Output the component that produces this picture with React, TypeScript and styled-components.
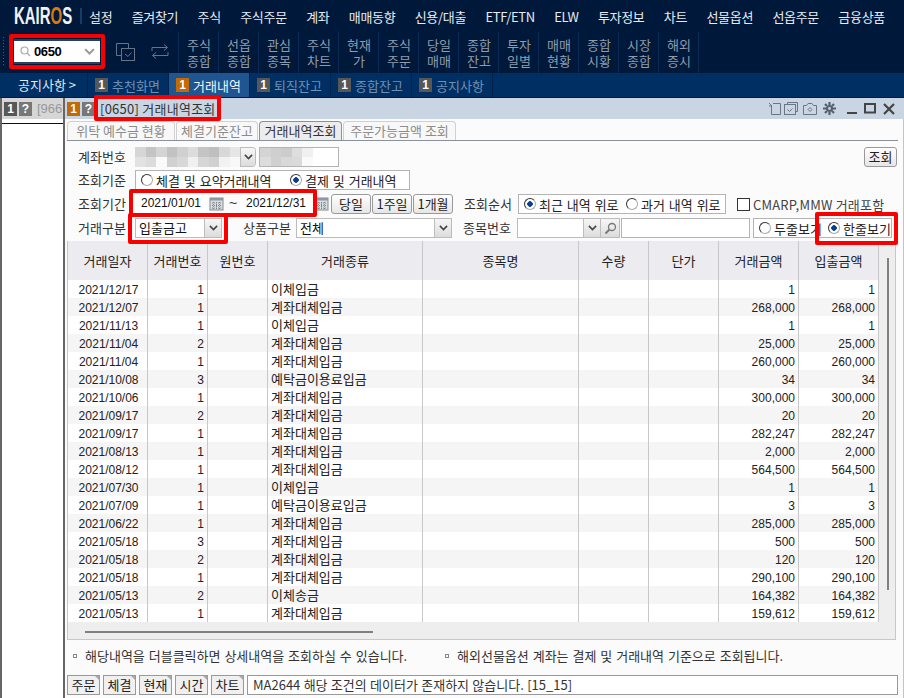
import React from 'react'
import styled, { createGlobalStyle } from 'styled-components'

const KR = `'Noto Sans CJK KR', 'Liberation Sans', sans-serif`
const LATIN = `'Liberation Sans', 'Noto Sans CJK KR', sans-serif`

const menus = ['설정', '즐겨찾기', '주식', '주식주문', '계좌', '매매동향', '신용/대출', 'ETF/ETN', 'ELW', '투자정보', '차트', '선물옵션', '선옵주문', '금융상품']
const tools = [['주식', '종합'], ['선옵', '종합'], ['관심', '종목'], ['주식', '차트'], ['현재', '가'], ['주식', '주문'], ['당일', '매매'], ['종합', '잔고'], ['투자', '일별'], ['매매', '현황'], ['종합', '시황'], ['시장', '종합'], ['해외', '증시']]
const screens = ['추천화면', '거래내역', '퇴직잔고', '종합잔고', '공지사항']
const subTabs = ['위탁 예수금 현황', '체결기준잔고', '거래내역조회', '주문가능금액 조회']
const columns = [
  { title: '거래일자', width: 80 },
  { title: '거래번호', width: 60 },
  { title: '원번호', width: 60 },
  { title: '거래종류', width: 155 },
  { title: '종목명', width: 156 },
  { title: '수량', width: 70 },
  { title: '단가', width: 70 },
  { title: '거래금액', width: 80 },
  { title: '입출금액', width: 80 },
]
const rows: [string, number, string, string][] = [
  ['2021/12/17', 1, '이체입금', '1'],
  ['2021/12/07', 1, '계좌대체입금', '268,000'],
  ['2021/11/13', 1, '이체입금', '1'],
  ['2021/11/04', 2, '계좌대체입금', '25,000'],
  ['2021/11/04', 1, '계좌대체입금', '260,000'],
  ['2021/10/08', 3, '예탁금이용료입금', '34'],
  ['2021/10/06', 1, '계좌대체입금', '300,000'],
  ['2021/09/17', 2, '계좌대체입금', '20'],
  ['2021/09/17', 1, '계좌대체입금', '282,247'],
  ['2021/08/13', 1, '계좌대체입금', '2,000'],
  ['2021/08/12', 1, '계좌대체입금', '564,500'],
  ['2021/07/30', 1, '이체입금', '1'],
  ['2021/07/09', 1, '예탁금이용료입금', '3'],
  ['2021/06/22', 1, '계좌대체입금', '285,000'],
  ['2021/05/18', 3, '계좌대체입금', '500'],
  ['2021/05/18', 2, '계좌대체입금', '120'],
  ['2021/05/18', 1, '계좌대체입금', '290,100'],
  ['2021/05/13', 2, '이체송금', '164,382'],
  ['2021/05/13', 1, '계좌대체입금', '159,612'],
]
const mosaicA = ['#d6d6d6', '#c4c4c4', '#d4d4d4', '#c2c2c2', '#d0d0d0', '#dcdcdc', '#c4c4c4', '#bfbfbf', '#d8d8d8', '#e6e6e6', '#e2e2e2', '#dcdcdc', '#fafafa', '#d0d0d0', '#d8d8d8', '#f0f0f0', '#d6d6d6', '#d0d0d0', '#f2f2f2', '#f8f8f8']
const mosaicB = ['#d4d4d4', '#cfcfcf', '#cccccc', '#dedede', '#f0f0f0', '#dcdcdc', '#d0d0d0', '#d8d8d8', '#dadada', '#fafafa']
const orderButtons = ['주문', '체결', '현재', '시간', '차트']

const GlobalStyle = createGlobalStyle`
  html, body { margin: 0; padding: 0; background: #fff; }
  * { box-sizing: border-box; }
  body { font-family: ${KR}; font-size: 13px; color: #222; }
`

const Page = styled.div`
  width: 904px;
  height: 698px;
  overflow: hidden;
  display: flex;
  flex-direction: column;
`
const MenuBar = styled.div`
  height: 32px;
  background: #00183a;
  display: flex;
  align-items: center;
  padding-left: 14px;
`
const Logo = styled.div`
  width: 58px;
  font-family: ${LATIN};
  font-size: 23px;
  font-weight: 700;
  color: #f2f2f2;
  transform: scaleX(0.65);
  transform-origin: left center;
  white-space: nowrap;
  span { color: #d87a10; }
`
const LogoBar = styled.div`
  width: 2px;
  height: 16px;
  background: #1d3a66;
  margin: 0 7px 0 8px;
`
const MenuList = styled.div`
  display: flex;
  gap: 19.3px;
`
const MenuItem = styled.div`
  color: #e6ebf2;
  font-size: 13px;
  letter-spacing: -0.3px;
  white-space: nowrap;
`
const ToolBar = styled.div`
  height: 41px;
  background: #00183a;
  display: flex;
  align-items: stretch;
`
const Grip = styled.div`
  width: 3px;
  margin: 4px 0 6px 2px;
  background-image: radial-gradient(#3c5a85 1px, transparent 1px);
  background-size: 3px 3px;
`
const SearchBox = styled.div`
  width: 86px;
  height: 25px;
  margin: 7px 0 0 9px;
  background: #fff;
  border-top: 2px solid #2c3f5c;
  border-bottom: 2px solid #2c3f5c;
  display: flex;
  align-items: center;
  padding: 0 5px 0 6px;
`
const Code = styled.span`
  font-family: ${LATIN};
  font-weight: 700;
  font-size: 13px;
  letter-spacing: -0.4px;
  color: #000;
  margin-left: 3px;
  flex: 1;
`
const ToolIcons = styled.div`
  width: 78px;
  display: flex;
  align-items: center;
  gap: 15px;
  padding: 0 0 2px 16px;
`
const ToolItem = styled.div`
  width: 40px;
  height: 41px;
  border-left: 1px solid #0c2a55;
  color: #8f9cad;
  font-size: 13px;
  line-height: 15.5px;
  text-align: center;
  padding: 5px 0 0 1px;
  &:last-child { width: 41px; border-right: 1px solid #0c2a55; }
`
const ScreenBar = styled.div`
  height: 25px;
  background: #003063;
  display: flex;
  align-items: stretch;
  border-bottom: 1px solid #00183a;
`
const Notice = styled.div`
  width: 88px;
  color: #dfe7f0;
  font-size: 13px;
  padding: 1px 0 0 18px;
  line-height: 22px;
  border-right: 1px solid #022049;
  white-space: nowrap;
`
const ScreenTab = styled.div<{ $active?: boolean }>`
  width: 81px;
  display: flex;
  align-items: center;
  gap: 4px;
  padding-left: 7px;
  background: ${p => (p.$active ? '#1f5590' : 'transparent')};
  color: ${p => (p.$active ? '#f2f5f9' : '#6f8fb3')};
  border-right: 1px solid #022049;
  white-space: nowrap;
`
const Badge = styled.span<{ $tone?: 'orange' | 'dark' | 'gray' }>`
  width: 13px;
  height: 14px;
  flex: none;
  background: ${p => (p.$tone === 'orange' ? '#c06a08' : p.$tone === 'gray' ? '#777' : '#575757')};
  color: #fff;
  font-family: ${LATIN};
  font-size: 12px;
  font-weight: 700;
  line-height: 14px;
  text-align: center;
`
const Desk = styled.div`
  flex: 1;
  display: flex;
  min-height: 0;
`
const SideWindow = styled.div`
  width: 63px;
  flex: none;
  border-left: 2px solid #666;
  background: #fff;
  overflow: hidden;
`
const SideTitle = styled.div`
  height: 26px;
  background: #d6d6d6;
  border-bottom: 1px solid #111;
  display: flex;
  align-items: center;
  gap: 2px;
  padding: 0 0 4px 2px;
  color: #999;
  white-space: nowrap;
  box-shadow: inset 0 -4px 0 #fff;
`
const SideCode = styled.span`
  margin-left: 3px;
  font-family: ${LATIN};
  font-size: 13px;
`
const MainWindow = styled.div`
  flex: 1;
  min-width: 0;
  border-left: 2px solid #666;
  border-right: 1px solid #c4c4c4;
  background: #fbfbfb;
  display: flex;
  flex-direction: column;
  padding-right: 7px;
`
const TitleBar = styled.div`
  height: 21px;
  margin-right: -8px;
  background: #c9d5e3;
  display: flex;
  align-items: center;
  gap: 2px;
  padding: 0 9px 0 2px;
`
const Marked = styled.div<{ $inset: string }>`
  position: relative;
  display: flex;
  align-items: center;
  &::after {
    content: '';
    position: absolute;
    inset: ${p => p.$inset};
    border: 4px solid #f80000;
    border-radius: 2px;
    pointer-events: none;
    z-index: 5;
  }
`
const SearchMark = styled(Marked)`
  align-items: flex-start;
`
const TitleText = styled.span`
  margin-left: 3px;
  font-size: 13px;
  color: #333;
  white-space: nowrap;
  letter-spacing: 0.25px;
`
const WindowIcons = styled.div`
  margin-left: auto;
  display: flex;
  align-items: center;
  gap: 3px;
`
const IconSlot = styled.span<{ $ml?: number }>`
  display: flex;
  margin-left: ${p => p.$ml ?? 0}px;
`
const TabStrip = styled.div`
  height: 22px;
  margin: 0 -2px 0 2px;
  padding-top: 3px;
  display: flex;
  align-items: flex-end;
  gap: 1px;
  border-bottom: 1px solid #8a929c;
`
const SubTab = styled.div<{ $active?: boolean; $w: number }>`
  width: ${p => p.$w}px;
  height: 19px;
  border: 1px solid ${p => (p.$active ? '#8a929c' : '#d0d0d0')};
  border-bottom: 0;
  border-radius: 4px 4px 0 0;
  background: ${p => (p.$active ? '#ececec' : '#f8f8f8')};
  color: ${p => (p.$active ? '#333' : '#8c8c8c')};
  font-size: 13px;
  line-height: 17px;
  text-align: center;
  white-space: nowrap;
`
const Form = styled.div`
  display: flex;
  flex-direction: column;
  height: 100px;
  padding: 6px 0 0 13px;
`
const FormRow = styled.div`
  height: 24px;
  display: flex;
  align-items: flex-start;
  flex: none;
  &:first-child { height: 23px; }
`
const Label = styled.span<{ $ml?: number; $w?: number }>`
  width: ${p => p.$w ?? 57}px;
  margin-left: ${p => p.$ml ?? 0}px;
  flex: none;
  font-size: 13px;
  line-height: 19px;
  color: #333;
  white-space: nowrap;
`
const Mosaic = styled.div<{ $w: number; $cols: number }>`
  width: ${p => p.$w}px;
  height: 20px;
  display: grid;
  grid-template-columns: repeat(${p => p.$cols}, 1fr);
  grid-auto-rows: 10px;
  flex: none;
`
const InputMosaic = styled(Mosaic)`
  height: 18px;
  grid-auto-rows: 9px;
`
const Cell = styled.i<{ $c: string }>`
  background: ${p => p.$c};
`
const ArrowButton = styled.span<{ $w?: number }>`
  width: ${p => p.$w ?? 17}px;
  flex: none;
  align-self: stretch;
  border-left: 1px solid #bdbdbd;
  background: linear-gradient(#f6f6f6, #dcdcdc);
  display: flex;
  align-items: center;
  justify-content: center;
`
const SelectBox = styled.div<{ $w: number; $ml?: number }>`
  width: ${p => p.$w}px;
  height: 20px;
  margin-left: ${p => p.$ml ?? 0}px;
  flex: none;
  border: 1px solid #bcbcbc;
  background: #fff;
  display: flex;
  align-items: stretch;
`
const AccountArrow = styled(SelectBox)`
  border-left: 0;
  border-radius: 0 4px 4px 0;
  overflow: hidden;
`
const SelectText = styled.span`
  flex: 1;
  padding-left: 3px;
  font-size: 13px;
  line-height: 18px;
  color: #111;
  white-space: nowrap;
`
const PlainInput = styled.div<{ $w: number; $ml?: number }>`
  width: ${p => p.$w}px;
  height: 20px;
  margin-left: ${p => p.$ml ?? 0}px;
  flex: none;
  border: 1px solid #b4b4b4;
  background: #fff;
`
const RadioGroup = styled.div<{ $w: number; $ml?: number }>`
  width: ${p => p.$w}px;
  height: 20px;
  margin-left: ${p => p.$ml ?? 0}px;
  flex: none;
  border: 1px solid #b4b4b4;
  background: #fff;
  display: flex;
  align-items: center;
  padding-left: 5px;
`
const RadioOption = styled.span<{ $w?: number }>`
  width: ${p => (p.$w ? `${p.$w}px` : 'auto')};
  flex: none;
  display: flex;
  align-items: center;
  gap: 3px;
  font-size: 13px;
  word-spacing: 1px;
  color: #222;
  white-space: nowrap;
`
const RadioDot = styled.i<{ $on?: boolean }>`
  width: 12px;
  height: 12px;
  border-radius: 50%;
  border: 1px solid #333;
  border-right-color: #aaa;
  border-bottom-color: #aaa;
  background: ${p => (p.$on ? 'radial-gradient(circle, #0b3f8a 0 2.5px, #fff 3px)' : '#fff')};
  flex: none;
`
const DateField = styled.div`
  width: 72px;
  height: 19px;
  flex: none;
  background: #fff;
  font-family: ${LATIN};
  font-size: 12px;
  line-height: 19px;
  text-align: center;
  color: #111;
`
const Tilde = styled.span`
  width: 14px;
  flex: none;
  text-align: center;
  font-family: ${LATIN};
  font-size: 14px;
  line-height: 19px;
  color: #333;
`
const CalButton = styled.span`
  width: 19px;
  height: 19px;
  flex: none;
  display: flex;
  align-items: center;
  justify-content: center;
`
const SoftButton = styled.div<{ $w: number; $ml?: number }>`
  width: ${p => p.$w}px;
  height: 20px;
  margin-left: ${p => p.$ml ?? 0}px;
  flex: none;
  border: 1px solid #999;
  border-radius: 3px;
  background: linear-gradient(#fff, #e6e6e6);
  font-size: 13px;
  line-height: 18px;
  text-align: center;
  color: #222;
  white-space: nowrap;
`
const CheckOption = styled.div`
  margin-left: 11px;
  display: flex;
  align-items: center;
  gap: 3px;
  height: 20px;
  font-size: 13px;
  letter-spacing: 0.2px;
  color: #444;
  white-space: nowrap;
`
const CheckBox = styled.i`
  width: 13px;
  height: 13px;
  border: 1px solid #333;
  background: #fff;
  flex: none;
`
const TablePanel = styled.div`
  height: 399px;
  margin-left: 2px;
  border: 1px solid #c8c8c8;
  border-top: 0;
  background: #eeeeee;
  position: relative;
`
const Grid = styled.table`
  width: 811px;
  border-collapse: separate;
  border-spacing: 0;
  table-layout: fixed;
  background: #fff;
`
const HeadCell = styled.th`
  height: 39px;
  padding: 0;
  background: #ebebf0;
  border-right: 1px solid #c8c8c8;
  font-size: 13px;
  font-weight: 400;
  color: #222;
`
const BodyRow = styled.tr`
  height: 18px;
  &:nth-child(even) td { background: #f5f5f5; }
`
const BodyCell = styled.td<{ $align?: string; $kr?: boolean }>`
  height: 18px;
  padding: ${p => (p.$kr ? '0 0 0 3px' : '1px 3px 0 0')};
  text-align: ${p => p.$align ?? 'right'};
  border-right: 1px solid #c8c8c8;
  font-family: ${p => (p.$kr ? KR : LATIN)};
  font-size: ${p => (p.$kr ? 13 : 12)}px;
  line-height: 16px;
  color: #222;
  white-space: nowrap;
  overflow: hidden;
`
const DateCell = styled(BodyCell)`
  padding: 1px 0 0 2px;
`
const VScroll = styled.div`
  position: absolute;
  top: 17px;
  right: 6px;
  bottom: 49px;
  width: 2px;
  background: #808080;
`
const HScroll = styled.div`
  position: absolute;
  left: 17px;
  bottom: 6px;
  width: 288px;
  height: 2px;
  background: #808080;
`
const Notes = styled.div`
  height: 35px;
  margin-left: 2px;
  padding: 0 0 4px 6px;
  display: flex;
  align-items: center;
`
const Note = styled.div<{ $w?: number }>`
  width: ${p => (p.$w ? `${p.$w}px` : 'auto')};
  font-size: 13px;
  word-spacing: 1px;
  color: #333;
  white-space: nowrap;
  display: flex;
  align-items: center;
  gap: 8px;
`
const Square = styled.i`
  width: 4px;
  height: 4px;
  border: 1px solid #888;
  flex: none;
`
const StatusBar = styled.div`
  height: 22px;
  margin: 0 -2px 0 2px;
  display: flex;
  align-items: flex-start;
  gap: 3px;
`
const OrderButton = styled.div`
  position: relative;
  width: 33px;
  height: 20px;
  border: 1px solid #999;
  background: #f0f0f0;
  font-size: 13px;
  line-height: 18px;
  text-align: center;
  &::after {
    content: '';
    position: absolute;
    top: 0;
    right: 0;
    border-top: 4px solid #aaa;
    border-left: 4px solid transparent;
  }
`
const StatusText = styled.div`
  flex: 1;
  height: 20px;
  border: 1px solid #999;
  background: #fff;
  padding-left: 5px;
  font-size: 13px;
  word-spacing: 0.4px;
  line-height: 18px;
  color: #333;
  white-space: nowrap;
`

const Chevron = ({ size = 9, color = '#444' }: { size?: number; color?: string }) => (
  <svg width={size} height={size * 0.6} viewBox="0 0 10 6" fill="none" stroke={color} strokeWidth="1.8">
    <path d="M1 1l4 4 4-4" />
  </svg>
)
const Calendar = () => (
  <svg width="15" height="15" viewBox="0 0 15 15" fill="none">
    <rect x="1" y="2" width="13" height="12" fill="#d8dde2" stroke="#8a8a8a" />
    <rect x="1" y="2" width="13" height="2.5" fill="#8f98a2" />
    <path d="M3 7h9M3 9.5h9M3 12h9M4.5 6v7M7.5 6v7M10.5 6v7" stroke="#80868d" strokeDasharray="1 1" />
  </svg>
)

export default function App() {
  return (
    <Page>
      <GlobalStyle />
      <MenuBar>
        <Logo>KAIR<span>O</span>S</Logo>
        <LogoBar />
        <MenuList>
          {menus.map(m => <MenuItem key={m}>{m}</MenuItem>)}
        </MenuList>
      </MenuBar>
      <ToolBar>
        <Grip />
        <SearchMark $inset="2px -5px 4px 4px">
          <SearchBox>
            <svg width="11" height="11" viewBox="0 0 11 11" fill="none" stroke="#aaa" strokeWidth="1.2">
              <circle cx="4.5" cy="4.5" r="3.5" />
              <path d="M7 7l3 3" />
            </svg>
            <Code>0650</Code>
            <Chevron size={11} color="#999" />
          </SearchBox>
        </SearchMark>
        <ToolIcons>
          <svg width="20" height="18" viewBox="0 0 20 18" fill="none" stroke="#66748a">
            <path d="M5.5 12.5h-5v-12h12v5" />
            <rect x="5.5" y="5.5" width="13" height="12" />
            <path d="M9 11l3 2.5 3.5-4" />
          </svg>
          <svg width="18" height="17" viewBox="0 0 18 17" fill="none" stroke="#66748a">
            <path d="M1 8V4.5h15M13 1.5l3.5 3-3.5 3M17 9v3.5H2M5 9.5l-3.5 3 3.5 3" />
          </svg>
        </ToolIcons>
        {tools.map(([a, b], i) => (
          <ToolItem key={i}>{a}<br />{b}</ToolItem>
        ))}
      </ToolBar>
      <ScreenBar>
        <Notice>공지사항 &gt;</Notice>
        {screens.map((s, i) => (
          <ScreenTab key={s} $active={i === 1}>
            <Badge $tone={i === 1 ? 'orange' : 'dark'}>1</Badge>
            {s}
          </ScreenTab>
        ))}
      </ScreenBar>
      <Desk>
        <SideWindow>
          <SideTitle>
            <Badge>1</Badge>
            <Badge $tone="gray">?</Badge>
            <SideCode>[966</SideCode>
          </SideTitle>
        </SideWindow>
        <MainWindow>
          <TitleBar>
            <Badge $tone="orange">1</Badge>
            <Badge $tone="gray">?</Badge>
            <Marked $inset="-4px -5px -3px -3px">
              <TitleText>[0650] 거래내역조회</TitleText>
            </Marked>
            <WindowIcons>
              <svg width="13" height="13" viewBox="0 0 13 13" fill="none" stroke="#6b7683">
                <path d="M3.5 3v9.5h9v-11H5M1 1l3 3M1 4h2.5" />
              </svg>
              <svg width="14" height="13" viewBox="0 0 14 13" fill="none" stroke="#6b7683">
                <path d="M3.5 2.5v-2h10v9h-2" />
                <rect x="0.5" y="2.5" width="11" height="10" />
                <path d="M3.5 7.5l2 2 3-3" />
              </svg>
              <IconSlot $ml={2}>
                <svg width="14" height="13" viewBox="0 0 14 13" fill="none" stroke="#6b7683">
                  <path d="M0.5 3.5h3l1.5-2h4l1.5 2h3v9h-13z" />
                  <path d="M7 5.5l2 2-2 2-2-2z" />
                </svg>
              </IconSlot>
              <IconSlot $ml={3}>
                <svg width="13" height="13" viewBox="0 0 13 13" fill="none" stroke="#55606d" strokeWidth="2.2">
                  <circle cx="6.5" cy="6.5" r="2.5" />
                  <path d="M6.5 0v3M6.5 10v3M0 6.5h3M10 6.5h3M2 2l2 2M9 9l2 2M11 2l-2 2M4 9l-2 2" />
                </svg>
              </IconSlot>
              <IconSlot $ml={8}>
                <svg width="11" height="13" viewBox="0 0 11 13" fill="#444">
                  <rect x="0" y="10" width="10" height="2" />
                </svg>
              </IconSlot>
              <IconSlot $ml={3}>
                <svg width="13" height="13" viewBox="0 0 13 13" fill="none" stroke="#444" strokeWidth="2">
                  <rect x="1" y="2" width="10" height="8.5" />
                </svg>
              </IconSlot>
              <IconSlot $ml={3}>
                <svg width="12" height="12" viewBox="0 0 12 12" fill="none" stroke="#444" strokeWidth="2.2">
                  <path d="M1 1l10 10M11 1L1 11" />
                </svg>
              </IconSlot>
            </WindowIcons>
          </TitleBar>
          <TabStrip>
            {subTabs.map((t, i) => (
              <SubTab key={t} $active={i === 2} $w={[108, 82, 83, 113][i]}>{t}</SubTab>
            ))}
          </TabStrip>
          <Form>
            <FormRow>
              <Label>계좌번호</Label>
              <Mosaic $w={105} $cols={10}>
                {mosaicA.map((c, i) => <Cell key={i} $c={c} />)}
              </Mosaic>
              <AccountArrow $w={16}>
                <ArrowButton $w={15}><Chevron /></ArrowButton>
              </AccountArrow>
              <PlainInput $w={80} $ml={3}>
                <InputMosaic $w={53} $cols={5}>
                  {mosaicB.map((c, i) => <Cell key={i} $c={c} />)}
                </InputMosaic>
              </PlainInput>
              <SoftButton $w={33} $ml={525}>조회</SoftButton>
            </FormRow>
            <FormRow>
              <Label>조회기준</Label>
              <RadioGroup $w={275}>
                <RadioOption $w={149}><RadioDot />체결 및 요약거래내역</RadioOption>
                <RadioOption><RadioDot $on />결제 및 거래내역</RadioOption>
              </RadioGroup>
            </FormRow>
            <FormRow>
              <Label>조회기간</Label>
              <Marked $inset="-5px -5px -4px -6px">
                <DateField>2021/01/01</DateField>
                <CalButton><Calendar /></CalButton>
                <Tilde>~</Tilde>
                <DateField>2021/12/31</DateField>
              </Marked>
              <CalButton><Calendar /></CalButton>
              <SoftButton $w={40}>당일</SoftButton>
              <SoftButton $w={40} $ml={1}>1주일</SoftButton>
              <SoftButton $w={40} $ml={1}>1개월</SoftButton>
              <Label $ml={11} $w={54}>조회순서</Label>
              <RadioGroup $w={208}>
                <RadioOption $w={102}><RadioDot $on />최근 내역 위로</RadioOption>
                <RadioOption><RadioDot />과거 내역 위로</RadioOption>
              </RadioGroup>
              <CheckOption><CheckBox />CMARP,MMW 거래포함</CheckOption>
            </FormRow>
            <FormRow>
              <Label>거래구분</Label>
              <Marked $inset="-5px -6px -6px -7px">
                <SelectBox $w={87}>
                  <SelectText>입출금고</SelectText>
                  <ArrowButton><Chevron /></ArrowButton>
                </SelectBox>
              </Marked>
              <Label $ml={21} $w={53}>상품구분</Label>
              <SelectBox $w={156}>
                <SelectText>전체</SelectText>
                <ArrowButton><Chevron /></ArrowButton>
              </SelectBox>
              <Label $ml={11} $w={54}>종목번호</Label>
              <SelectBox $w={103}>
                <SelectText />
                <ArrowButton><Chevron /></ArrowButton>
                <ArrowButton $w={19}>
                  <svg width="13" height="13" viewBox="0 0 13 13" fill="none" stroke="#777" strokeWidth="1.3">
                    <circle cx="8" cy="5" r="3.5" />
                    <path d="M5.5 7.5L1.5 11.5" strokeWidth="2" />
                  </svg>
                </ArrowButton>
              </SelectBox>
              <PlainInput $w={129} $ml={1} />
              <RadioGroup $w={139} $ml={3}>
                <RadioOption $w={69}><RadioDot />두줄보기</RadioOption>
                <Marked $inset="-7px -7px -7px -13px">
                  <RadioOption><RadioDot $on />한줄보기</RadioOption>
                </Marked>
              </RadioGroup>
            </FormRow>
          </Form>
          <TablePanel>
            <Grid>
              <colgroup>
                {columns.map(c => <col key={c.title} width={c.width} />)}
              </colgroup>
              <thead>
                <tr>
                  {columns.map(c => <HeadCell key={c.title}>{c.title}</HeadCell>)}
                </tr>
              </thead>
              <tbody>
                {rows.map((r, i) => (
                  <BodyRow key={i}>
                    <DateCell $align="center">{r[0]}</DateCell>
                    <BodyCell>{r[1]}</BodyCell>
                    <BodyCell />
                    <BodyCell $kr $align="left">{r[2]}</BodyCell>
                    <BodyCell />
                    <BodyCell />
                    <BodyCell />
                    <BodyCell>{r[3]}</BodyCell>
                    <BodyCell>{r[3]}</BodyCell>
                  </BodyRow>
                ))}
              </tbody>
            </Grid>
            <VScroll />
            <HScroll />
          </TablePanel>
          <Notes>
            <Note $w={372}><Square />해당내역을 더블클릭하면 상세내역을 조회하실 수 있습니다.</Note>
            <Note><Square />해외선물옵션 계좌는 결제 및 거래내역 기준으로 조회됩니다.</Note>
          </Notes>
          <StatusBar>
            {orderButtons.map(b => <OrderButton key={b}>{b}</OrderButton>)}
            <StatusText>MA2644 해당 조건의 데이터가 존재하지 않습니다. [15_15]</StatusText>
          </StatusBar>
        </MainWindow>
      </Desk>
    </Page>
  )
}
